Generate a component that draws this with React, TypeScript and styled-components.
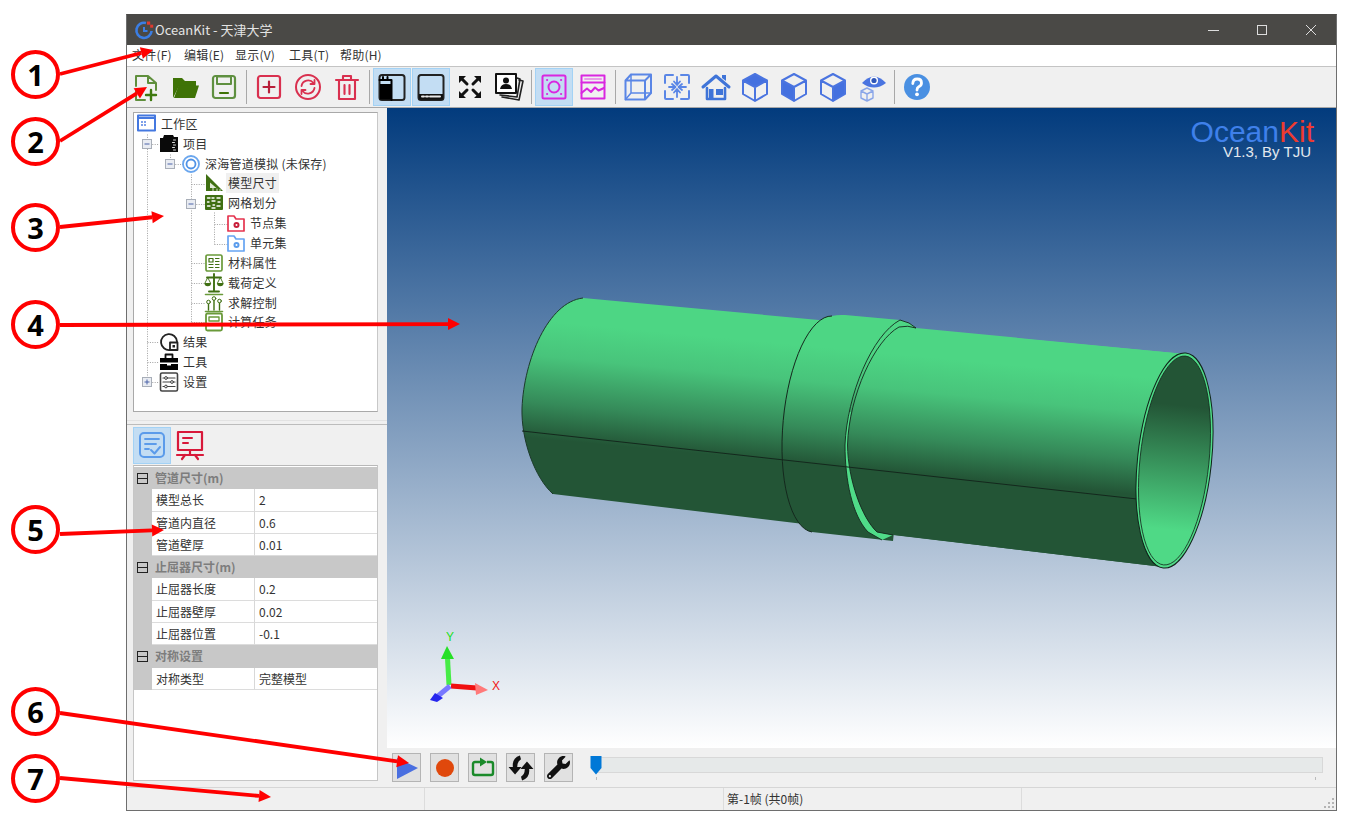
import React from "react";
import styled, { createGlobalStyle } from "styled-components";
import { FaWrench } from "react-icons/fa";

const UI_FONT = `"Noto Sans CJK SC", "Noto Sans", sans-serif`;

const Global = createGlobalStyle`
  html, body { margin: 0; padding: 0; background: #fff; }
  * { box-sizing: border-box; }
  body { font-family: ${UI_FONT}; font-size: 12px; color: #222; overflow: hidden; }
`;

const Page = styled.div`
  position: relative;
  width: 1351px;
  height: 825px;
  padding: 14px 0 0 126px;
`;
const Win = styled.div`
  width: 1211px;
  height: 797px;
  border: 1px solid #6e6e6e;
  border-top-color: #4a4946;
  display: flex;
  flex-direction: column;
  background: #f0f0f0;
`;
const TitleBar = styled.div`
  height: 30px;
  flex: none;
  background: #4a4946;
  color: #e4e4e4;
  font-size: 13px;
  display: flex;
  align-items: center;
  padding-left: 7px;
  gap: 1px;
`;
const TitleText = styled.span`
  flex: 1;
  padding-bottom: 2px;
`;
const WinControls = styled.div`
  display: flex;
  align-items: center;
  padding-right: 1px;
`;
const WinBtn = styled.div`
  width: 49px;
  height: 30px;
  display: flex;
  align-items: center;
  justify-content: center;
`;
const MenuBar = styled.div`
  height: 22px;
  flex: none;
  background: #fff;
  border-bottom: 1px solid #c4c4c4;
  display: flex;
  align-items: center;
  padding: 0 0 2px 5px;
  color: #333;
  letter-spacing: 0.2px;
`;
const MenuItem = styled.span<{ $w: number }>`
  width: ${(p) => p.$w}px;
  line-height: 19px;
`;
const ToolBar = styled.div`
  height: 41px;
  flex: none;
  background: #f0f0f0;
  border-bottom: 1px solid #a8a8a8;
  display: flex;
  align-items: center;
  padding-left: 0;
`;
const ToolBtn = styled.div<{ $on?: boolean }>`
  width: 38px;
  height: 38px;
  margin-right: 1px;
  display: flex;
  align-items: center;
  justify-content: center;
  background: ${(p) => (p.$on ? "#c3ddf3" : "transparent")};
  border: 1px solid ${(p) => (p.$on ? "#a3d2f5" : "transparent")};
`;
const ToolSep = styled.div`
  width: 1px;
  height: 34px;
  background: #a8a8a8;
  margin: 0 3px 0 2px;
`;
const Body = styled.div`
  flex: 1;
  min-height: 0;
  display: flex;
`;
const LeftPanel = styled.div`
  width: 260px;
  flex: none;
  display: flex;
  flex-direction: column;
  padding: 4px 9px 0 6px;
`;
const TreeBox = styled.div`
  position: relative;
  height: 300px;
  flex: none;
  background: #fff;
  border: 1px solid #a9a9a9;
  border-right-color: #c8c8c8;
  padding-top: 1px;
`;
const TreeLines = styled.svg`
  position: absolute;
  left: 0;
  top: 0;
`;
const TreeRow = styled.div<{ $x: number }>`
  position: relative;
  height: 19.85px;
  display: flex;
  align-items: center;
  gap: 4px;
  padding-left: ${(p) => p.$x}px;
`;
const TreeLabel = styled.span<{ $sel?: boolean }>`
  line-height: 20px;
  white-space: nowrap;
  color: #333;
  letter-spacing: 0.25px;
  background: ${(p) => (p.$sel ? "#f0f0f0" : "transparent")};
  padding: 0 2px;
  margin-left: -2px;
`;
const Splitter = styled.div`
  height: 13px;
  flex: none;
  margin: 0 -9px 0 -6px;
  border-bottom: 1px solid #bcbcbc;
  background: linear-gradient(transparent 8px, #e2e2e2 8px, #e2e2e2 9px, transparent 9px);
`;
const TabRow = styled.div`
  height: 40px;
  flex: none;
  display: flex;
  align-items: center;
  gap: 0;
`;
const TabBtn = styled.div<{ $on?: boolean }>`
  width: 38px;
  height: 37px;
  display: flex;
  align-items: center;
  justify-content: center;
  background: ${(p) => (p.$on ? "#c3ddf3" : "transparent")};
  border: 1px solid ${(p) => (p.$on ? "#a3d2f5" : "transparent")};
`;
const PropGrid = styled.div`
  height: 316px;
  flex: none;
  background: #fff;
  border: 1px solid #c6c6c6;
  border-top-color: #b8b8b8;
  padding-top: 1px;
`;
const GroupRow = styled.div`
  height: 22.3px;
  background: #c8c8c8;
  display: flex;
  align-items: center;
  color: #7d7d7d;
  font-weight: 700;
  font-size: 12px;
  line-height: 19px;
  padding-bottom: 2px;
`;
const GroupToggle = styled.svg`
  margin: 2px 7px 0 3px;
  flex: none;
`;
const PropRow = styled.div`
  height: 22.3px;
  display: grid;
  grid-template-columns: 18px 103px 1fr;
`;
const Gutter = styled.div`
  background: #c8c8c8;
`;
const PropName = styled.div`
  border-right: 1px solid #d8d8d8;
  border-bottom: 1px solid #dcdcdc;
  padding-left: 4px;
  line-height: 21px;
  color: #333;
`;
const PropVal = styled.div`
  border-bottom: 1px solid #dcdcdc;
  padding-left: 4px;
  line-height: 21px;
  color: #333;
`;
const MainCol = styled.div`
  flex: 1;
  min-width: 0;
  display: flex;
  flex-direction: column;
`;
const Viewport = styled.div`
  position: relative;
  height: 640px;
  flex: none;
  background: linear-gradient(#023b7d, #ffffff);
`;
const Scene = styled.svg`
  display: block;
`;
const Logo = styled.div`
  position: absolute;
  right: 22px;
  top: 9px;
  font-family: "Liberation Sans", Arial, sans-serif;
  text-align: right;
`;
const LogoName = styled.div`
  font-size: 30px;
  line-height: 29px;
  color: #3f80ea;
`;
const LogoKit = styled.span`
  color: #ee3b2f;
`;
const LogoSub = styled.div`
  font-size: 15px;
  line-height: 12px;
  margin-right: 3px;
  color: #e2e8ee;
`;
const AnimBar = styled.div`
  flex: 1;
  display: flex;
  align-items: flex-start;
  padding: 5px 0 0 5px;
  gap: 9px;
  background: #f0f0f0;
`;
const AnimBtn = styled.div`
  width: 29px;
  height: 29px;
  background: #e1e1e1;
  border: 1px solid #b4b4b4;
  display: flex;
  align-items: center;
  justify-content: center;
`;
const SliderWrap = styled.div`
  position: relative;
  margin-left: 6px;
  width: 748px;
  height: 28px;
`;
const SliderTrack = styled.div`
  position: absolute;
  left: 9px;
  right: 13px;
  top: 4px;
  height: 16px;
  background: #e6e9e9;
  border: 1px solid #d8d8d8;
`;
const SliderThumb = styled.svg`
  position: absolute;
  left: 2px;
  top: 2px;
`;
const Tick = styled.div<{ $side: "l" | "r" }>`
  position: absolute;
  ${(p) => (p.$side === "l" ? "left: 8px;" : "right: 20px;")}
  top: 24px;
  width: 1px;
  height: 3px;
  background: #bbb;
`;
const StatusBar = styled.div`
  height: 23px;
  flex: none;
  border-top: 1px solid #d6d6d6;
  display: grid;
  grid-template-columns: 298px 299px 298px 1fr;
  background: #f0f0f0;
  position: relative;
`;
const StatusCell = styled.div`
  border-right: 1px solid #dcdcdc;
  padding-left: 3px;
  line-height: 22px;
  color: #333;
  &:last-of-type { border-right: 0; }
`;
const Grip = styled.svg`
  position: absolute;
  right: 1px;
  bottom: 1px;
`;
const Overlay = styled.svg`
  position: absolute;
  left: 0;
  top: 0;
  pointer-events: none;
`;
const Callout = styled.div<{ $cy: number }>`
  position: absolute;
  left: 11px;
  top: ${(p) => p.$cy - 25}px;
  width: 49px;
  height: 49px;
  border: 4px solid #ff0000;
  border-radius: 50%;
  display: flex;
  align-items: center;
  justify-content: center;
  font-family: "Open Sans", sans-serif;
  font-weight: 700;
  font-size: 29px;
  line-height: 1;
  color: #000;
`;

const T = ({ children, s = 32 }: { children: React.ReactNode; s?: number }) => (
  <svg width={s} height={s} viewBox="0 0 32 32" fill="none" strokeLinejoin="round" strokeLinecap="round">
    {children}
  </svg>
);
const G1 = "#5f8f3c", RD = "#d9304f", BL = "#5a86e6", MG = "#d927e0";

const Isometric = ({ face }: { face: string }) => (
  <T>
    <path d={face} fill="#4470df" />
    <path d="M16 3 L28 9.5 V23 L16 30 L4 23 V9.5Z M4 9.5 L16 16 L28 9.5 M16 16 V30" stroke="#4a74e0" strokeWidth="2" />
  </T>
);

const toolIcons: React.ReactNode[][] = [
  [
    <T key="new">
      <path d="M6 15 V5 H18 L26 12 V19 M18 5 V12 H26 M15 29 H6 V19" stroke={G1} strokeWidth="2" />
      <path d="M21 19 V29 M16 24 H26" stroke="#3f7a10" strokeWidth="2.4" />
    </T>,
    <T key="open">
      <path d="M4 27 V7 H13 L16 10 H27 V15 H10 L4 27Z" fill="#3f7306" />
      <path d="M5 27 L9.5 14.5 H30 L26 27Z" fill="#3f7306" />
    </T>,
    <T key="save">
      <rect x="5" y="5" width="22" height="22" rx="2.5" stroke="#5f9040" strokeWidth="2.2" />
      <path d="M9 5.5 H23 V13 H9Z" stroke="#5f9040" strokeWidth="2" />
      <path d="M12 22 H20" stroke="#3f7306" strokeWidth="2.2" />
    </T>,
  ],
  [
    <T key="add">
      <rect x="5" y="5" width="22" height="22" rx="2.5" stroke={RD} strokeWidth="2.2" />
      <path d="M16 10.5 V21.5 M10.5 16 H21.5" stroke="#b81f3a" strokeWidth="2.2" />
    </T>,
    <T key="ref">
      <circle cx="16" cy="16" r="12" stroke={RD} strokeWidth="2" />
      <path d="M9.5 15 A6.8 6.8 0 0 1 21.5 12 M22.5 17 A6.8 6.8 0 0 1 10.5 20" stroke={RD} strokeWidth="1.8" />
      <path d="M22.5 9 V13 H18.5 M9.5 23 V19 H13.5" stroke={RD} strokeWidth="1.8" />
    </T>,
    <T key="del">
      <path d="M5 9 H27 M12 8.5 V5 H20 V8.5 M8 9 V28 H24 V9" stroke={RD} strokeWidth="2.1" />
      <path d="M13.5 14 V23 M18.5 14 V23" stroke={RD} strokeWidth="2.1" />
    </T>,
  ],
  [
    <T key="pl">
      <rect x="3.5" y="4" width="25" height="25" rx="2.5" fill="#c3ddf3" stroke="#222" strokeWidth="2" />
      <rect x="4" y="13" width="11" height="15.5" fill="#000" />
      <path d="M3.5 9 H15.5 V29 " stroke="#000" strokeWidth="2" />
      <path d="M7 6 V9 M11.5 6 V9" stroke="#000" strokeWidth="2" />
    </T>,
    <T key="pb">
      <rect x="3.5" y="4" width="25" height="25" rx="2.5" fill="#c3ddf3" stroke="#222" strokeWidth="2" />
      <rect x="4" y="23" width="24" height="5.5" fill="#111" />
      <path d="M7 25.5 H9 M11 25.5 H13 M15 25.5 H25" stroke="#e8e8e8" strokeWidth="2" />
    </T>,
    <T key="fs">
      <path d="M5 5 H12 L5 12Z M27 5 V12 L20 5Z M5 27 V20 L12 27Z M27 27 H20 L27 20Z" fill="#111" />
      <path d="M7 7 L13 13 M25 7 L19 13 M7 25 L13 19 M25 25 L19 19" stroke="#111" strokeWidth="3" />
    </T>,
    <T key="ph">
      <path d="M26 9 L30 10 L26 29 L9 26" stroke="#222" strokeWidth="1.6" />
      <path d="M24 7 L27 8 L24 26 L7 24" stroke="#222" strokeWidth="1.6" />
      <rect x="3" y="3" width="20" height="19" fill="#fff" stroke="#111" strokeWidth="2" />
      <circle cx="13" cy="9.5" r="3" fill="#111" />
      <path d="M7 18 Q8 13 13 13 Q18 13 19 18Z" fill="#111" />
    </T>,
  ],
  [
    <T key="sp">
      <rect x="4.5" y="4.5" width="23" height="23" rx="1.5" stroke={MG} strokeWidth="2" />
      <circle cx="16" cy="16" r="5.5" stroke={MG} strokeWidth="2" />
      <path d="M9 9 H9.2 M23 9 H23.2 M9 23 H9.2 M23 23 H23.2" stroke={MG} strokeWidth="2" />
    </T>,
    <T key="ch">
      <rect x="4.5" y="4.5" width="23" height="23" stroke={MG} strokeWidth="2" />
      <path d="M4.5 11.5 H27.5" stroke={MG} strokeWidth="2" />
      <path d="M8 8 H24" stroke="#e89be8" strokeWidth="2" />
      <path d="M4.5 22 L10 17.5 L14 21 L18 16.5 L21.5 19.5 L27 17" stroke={MG} strokeWidth="2" />
    </T>,
  ],
  [
    <T key="wf">
      <path d="M9 3.5 H29 V22 L23 28.5 H3.5 V9.5Z M3.5 9.5 H23 V28.5 M23 9.5 L29 3.5" stroke={BL} strokeWidth="2" />
      <path d="M9 3.5 V22 H29 M9 22 L3.5 28.5" stroke={BL} strokeWidth="1.5" />
    </T>,
    <T key="cp">
      <path d="M12 4 H5 Q4 4 4 5 V12 M20 4 H27 Q28 4 28 5 V12 M12 28 H5 Q4 28 4 27 V20 M20 28 H27 Q28 28 28 27 V20" stroke={BL} strokeWidth="2" />
      <path d="M16 6 V13 M13 10.5 L16 14 L19 10.5 M16 26 V19 M13 21.5 L16 18 L19 21.5 M8 16 H14 M11 13 L14.5 16 L11 19 M25 16 H18 M21 13 L17.5 16 L21 19" stroke={BL} strokeWidth="1.8" />
    </T>,
    <T key="hm">
      <path d="M3 16 L16 5 L29 16" stroke="#3f74d8" strokeWidth="3" />
      <path d="M22 4 H26 V10 L22 7Z" fill="#3f74d8" />
      <path d="M7 17 V28 H25 V17" stroke="#3f74d8" strokeWidth="2.6" />
      <rect x="16" y="18" width="7" height="6" fill="#3f74d8" />
      <rect x="9" y="18" width="4.5" height="10" fill="#3f74d8" />
    </T>,
    <Isometric key="c1" face="M16 3 L28 9.5 L16 16 L4 9.5Z" />,
    <Isometric key="c2" face="M4 9.5 L16 16 V30 L4 23Z" />,
    <Isometric key="c3" face="M28 9.5 L16 16 V30 L28 23Z" />,
    <T key="ey">
      <path d="M6 12 Q18 -1 30 12 Q18 21 6 12Z" fill="#4a74e0" />
      <circle cx="18" cy="9.5" r="4" fill="#fff" />
      <circle cx="18" cy="9.5" r="2.6" fill="#2f56b8" />
      <path d="M11 17 L17 20 V27 L11 30 L5 27 V20Z M5 20 L11 23 L17 20 M11 23 V30" stroke="#8aa6e8" strokeWidth="1.4" />
    </T>,
  ],
  [
    <T key="hp">
      <circle cx="16" cy="16" r="13" fill="#4a90e2" />
      <path d="M11.8 12.5 Q12 8 16.2 8 Q20.5 8 20.5 12 Q20.5 14.5 17.8 15.8 Q16 16.8 16 19" stroke="#fff" strokeWidth="2.8" />
      <circle cx="16" cy="23.3" r="1.9" fill="#fff" />
    </T>,
  ],
];
const activeTools = new Set(["2-0", "2-1", "3-0"]);

const TreeSvg = styled.svg`
  flex: none;
`;
const L = ({ children }: { children: React.ReactNode }) => (
  <TreeSvg width="20" height="20" viewBox="0 0 20 20" fill="none" strokeLinejoin="round" strokeLinecap="round">
    {children}
  </TreeSvg>
);
const GD = "#3f6f12", GL = "#6a9a3a";
const Folder = ({ c, dark }: { c: string; dark: string }) => (
  <L>
    <path d="M2 3 H8 L10 6 H18 V18 H2Z" fill="#fff" stroke={c} strokeWidth="1.7" />
    <circle cx="10.5" cy="12" r="3" fill={dark} />
    <circle cx="10.5" cy="12" r="1" fill="#fff" />
  </L>
);
const treeIcons: Record<string, React.ReactNode> = {
  ws: (
    <L>
      <rect x="1" y="1.5" width="17" height="15" fill="#fff" stroke="#4478e0" strokeWidth="2" />
      <path d="M1 4 H18" stroke="#4478e0" strokeWidth="2" />
      <path d="M4 7 H6 V9 H4Z M7 7 H9 V9 H7Z M4 10 H6 V12 H4Z M7 10 H9 V12 H7Z" fill="#7ea0ea" />
    </L>
  ),
  proj: (
    <L>
      <path d="M1 4 H4 L5 1 H14 L15 3 H19 V18 H1Z" fill="#0a0a0a" />
      <path d="M14.5 6 H16.5 M13.5 8.5 H15.5 M14.5 11 H16.5 M13.5 13.5 H15.5 M14.5 16 H16.5" stroke="#ddd" strokeWidth="1" />
    </L>
  ),
  ring: (
    <L>
      <circle cx="10" cy="10" r="8" stroke="#6aa6ee" strokeWidth="1.8" />
      <circle cx="10" cy="10" r="4.5" stroke="#4f92e6" strokeWidth="1.8" />
    </L>
  ),
  tri: (
    <L>
      <path d="M2 1 L19 18 H2Z" fill={GD} />
      <path d="M6 9.5 L12.5 15 H6Z" fill="#dfe8d4" />
      <path d="M9 15 V18 M13 16 V18 M16 16.5 V18" stroke="#fff" strokeWidth="0.8" />
    </L>
  ),
  mesh: (
    <L>
      <rect x="1" y="2" width="18" height="15" fill={GD} rx="1" />
      <path d="M3.5 5 H6 M8 5 H10 M13 5 H16 M3.5 9 H5 M8 8 H11 M14 9 H16 M3.5 13 H6 M9 12 H10.5 M13 13 H16 M8 15 H11" stroke="#fff" strokeWidth="1.4" />
    </L>
  ),
  red: <Folder c="#e5344f" dark="#c81e3a" />,
  blue: <Folder c="#66a4f2" dark="#5b9cec" />,
  mat: (
    <L>
      <rect x="2" y="2" width="16" height="16" rx="1.5" stroke={GL} strokeWidth="1.7" />
      <path d="M5 5.5 H9 V9 H5Z M5 11.5 H9 M5 14.5 H9 M11.5 5.5 H15 M11.5 8.5 H15 M11.5 11.5 H15 M11.5 14.5 H15" stroke={GD} strokeWidth="1.2" />
    </L>
  ),
  load: (
    <L>
      <path d="M10 1 V17 M5 18.5 H15 M3 4.5 H17" stroke={GD} strokeWidth="1.9" />
      <path d="M0.5 10 H7 A3.2 3.2 0 0 1 0.5 10Z M13 10 H19.5 A3.2 3.2 0 0 1 13 10Z" fill={GD} />
      <path d="M3.7 4.5 L1 10 M3.7 4.5 L6.5 10 M16.3 4.5 L13.5 10 M16.3 4.5 L19 10" stroke={GD} strokeWidth="0.9" />
    </L>
  ),
  solve: (
    <L>
      <path d="M1.5 1.5 H18.5 M1.5 18.5 H18.5" stroke={GL} strokeWidth="1.6" />
      <path d="M4.5 9 V17 M10 5 V17 M15.5 7 V17" stroke={GD} strokeWidth="1.4" />
      <circle cx="4.5" cy="9" r="1.8" stroke={GD} fill="#fff" />
      <circle cx="10" cy="5.5" r="1.8" stroke={GD} fill="#fff" />
      <circle cx="15.5" cy="8" r="1.8" stroke={GD} fill="#fff" />
    </L>
  ),
  task: (
    <L>
      <rect x="2" y="1.5" width="16" height="17" rx="1.5" stroke={GL} strokeWidth="1.8" />
      <rect x="5" y="5" width="10" height="4" stroke={GL} strokeWidth="1.4" />
      <path d="M2.5 13 H17.5" stroke={GL} strokeWidth="1.6" />
    </L>
  ),
  res: (
    <L>
      <path d="M11 18 A8 8 0 1 1 18 9.5" stroke="#222" strokeWidth="1.8" />
      <rect x="11" y="10.5" width="7.5" height="7.5" fill="#fff" stroke="#222" strokeWidth="1.8" />
      <rect x="13.5" y="13" width="2.5" height="2.5" fill="#222" />
    </L>
  ),
  tool: (
    <L>
      <path d="M6.5 6 V2.5 H13.5 V6" stroke="#111" strokeWidth="1.8" />
      <path d="M1 6 H19 V10.5 H1Z M1 12 H8 V13.5 H12 V12 H19 V18 H1Z" fill="#000" />
    </L>
  ),
  set: (
    <L>
      <rect x="1.5" y="1" width="17" height="18" rx="1.5" stroke="#444" strokeWidth="1.6" />
      <path d="M4 6 H16 M4 10 H16 M4 14.5 H16" stroke="#444" strokeWidth="1.2" />
      <circle cx="7" cy="6" r="1.4" fill="#fff" stroke="#444" />
      <circle cx="13" cy="10" r="1.4" fill="#fff" stroke="#444" />
      <circle cx="7" cy="14.5" r="1.4" fill="#fff" stroke="#444" />
    </L>
  ),
};
const treeData: { x: number; icon: string; text: string; sel?: boolean }[] = [
  { x: 3, icon: "ws", text: "工作区" },
  { x: 25, icon: "proj", text: "项目" },
  { x: 47, icon: "ring", text: "深海管道模拟 (未保存)" },
  { x: 70, icon: "tri", text: "模型尺寸", sel: true },
  { x: 70, icon: "mesh", text: "网格划分" },
  { x: 92, icon: "red", text: "节点集" },
  { x: 92, icon: "blue", text: "单元集" },
  { x: 70, icon: "mat", text: "材料属性" },
  { x: 70, icon: "load", text: "载荷定义" },
  { x: 70, icon: "solve", text: "求解控制" },
  { x: 70, icon: "task", text: "计算任务" },
  { x: 25, icon: "res", text: "结果" },
  { x: 25, icon: "tool", text: "工具" },
  { x: 25, icon: "set", text: "设置" },
];

const OX = 134, OY = 113;
const Expander = ({ x, y, plus }: { x: number; y: number; plus?: boolean }) => (
  <g transform={`translate(${x - OX - 5},${y - OY - 5})`}>
    <rect x="0.5" y="0.5" width="9" height="9" fill="#e9ecf2" stroke="#a8aeb8" />
    <path d="M2.5 5 H7.5" stroke="#4a62a8" />
    {plus && <path d="M5 2.5 V7.5" stroke="#4a62a8" />}
  </g>
);
const TreeGuides = () => {
  const seg = (x1: number, y1: number, x2: number, y2: number) => (
    <line key={`${x1}-${y1}-${x2}-${y2}`} x1={x1 - OX + 0.5} y1={y1 - OY + 0.5} x2={x2 - OX + 0.5} y2={y2 - OY + 0.5} stroke="#a0a0a0" strokeDasharray="1 1.4" />
  );
  return (
    <TreeLines width="243" height="298">
      {seg(147, 134, 147, 382)}
      {[144, 342, 362, 382].map((y) => seg(147, y, 159, y))}
      {seg(170, 154, 170, 164)}
      {seg(170, 164, 183, 164)}
      {seg(191, 174, 191, 322)}
      {[184, 204, 263, 283, 303, 322].map((y) => seg(191, y, 204, y))}
      {seg(214, 212, 214, 244)}
      {[224, 244].map((y) => seg(214, y, 227, y))}
      <Expander x={147} y={144} />
      <Expander x={170} y={164} />
      <Expander x={191} y={204} />
      <Expander x={147} y={382} plus />
    </TreeLines>
  );
};

const groups = [
  { name: "管道尺寸(m)", rows: [["模型总长", "2"], ["管道内直径", "0.6"], ["管道壁厚", "0.01"]] },
  { name: "止屈器尺寸(m)", rows: [["止屈器长度", "0.2"], ["止屈器壁厚", "0.02"], ["止屈器位置", "-0.1"]] },
  { name: "对称设置", rows: [["对称类型", "完整模型"]] },
];

const Pipe = () => (
  <Scene width="949" height="640" viewBox="387 108 949 640">
    <defs>
      <linearGradient id="body" gradientUnits="userSpaceOnUse" x1="800" y1="345" x2="789" y2="462">
        <stop offset="0" stopColor="#4dd684" />
        <stop offset="0.3" stopColor="#48c47b" />
        <stop offset="0.7" stopColor="#358a59" />
        <stop offset="1" stopColor="#235536" />
      </linearGradient>
      <linearGradient id="bore" gradientUnits="userSpaceOnUse" x1="1170" y1="405" x2="1170" y2="530">
        <stop offset="0" stopColor="#235536" />
        <stop offset="1" stopColor="#4fd986" />
      </linearGradient>
    </defs>
    <path d="M583 298 L1185 354 L1163 567 L553 494 C535 478 521 440 522 408 C524 360 548 302 583 298Z" fill="url(#body)" />
    <path d="M553 494 C535 478 521 440 522 408 C524 360 548 302 583 298" stroke="#1c3a2a" fill="none" />
    <path d="M832 316 Q838 314.5 845 315 L900 320 Q910 322 916 328 L893 541 L812 532 A40 108.5 5.3 0 1 832 316Z" fill="url(#body)" />
    <path d="M812 532 A40 108.5 5.3 0 1 832 316" stroke="#14281d" fill="none" />
    <path d="M849 412 C846 430 845 440 845 445 C845 480 852 515 868 532 L882 540 L893 535 L877 532 C862 518 848 480 848 445 C848 435 849 425 851 412Z" fill="#4fdc88" />
    <path d="M916 328 Q908 325 900 327 C875 340 849 395 848 445 C848 480 862 518 877 532 L893 535 L1163 567 L1185 354Z" fill="url(#body)" />
    <path d="M916 328 Q908 325 899 327 C875 340 849 395 847.5 445 C848 480 862 518 877 532 L893 535" stroke="#14281d" fill="none" strokeWidth="0.9" />
    <path d="M916 328 Q910 322 900 320 C872 335 847 395 845 445 C845 480 852 515 868 532 L882 540" stroke="#14281d" fill="none" strokeWidth="0.9" />
    <path d="M522 431 L1137 499" stroke="#14281d" strokeWidth="1" fill="none" />
    <ellipse cx="1174.5" cy="460.5" rx="37" ry="108" transform="rotate(6 1174.5 460.5)" fill="#4fdc88" stroke="#10241a" strokeWidth="1" />
    <ellipse cx="1174.5" cy="460.5" rx="34.5" ry="105" transform="rotate(6 1174.5 460.5)" fill="url(#bore)" stroke="#14281d" strokeWidth="0.8" />

    <path d="M449 685 L447.5 658" stroke="#46ec46" strokeWidth="5" />
    <path d="M447 646 L441 659 L454 659Z" fill="#27e027" />
    <path d="M451 686 L477 688" stroke="#f01010" strokeWidth="5" />
    <path d="M488 690 L475 683 L476 695Z" fill="#ff7a7a" />
    <path d="M450 686 L438 696" stroke="#7878ff" strokeWidth="5" />
    <path d="M430 700 L435 693 L443 698 L437 702Z" fill="#2626ee" />
    <text x="450" y="641" fontFamily="Liberation Sans, sans-serif" fontSize="12" fill="#22e022" textAnchor="middle">Y</text>
    <text x="496" y="690" fontFamily="Liberation Sans, sans-serif" fontSize="12" fill="#f01818" textAnchor="middle">X</text>
  </Scene>
);

const arrows: number[][] = [
  [60, 74, 153, 50],
  [60, 141, 147, 87],
  [60, 227, 164, 216],
  [60, 325, 460, 324],
  [60, 534, 164, 530],
  [60, 713, 409, 763],
  [60, 778, 271, 797],
];
const Arrow = ({ a }: { a: number[] }) => {
  const [x1, y1, x2, y2] = a;
  const len = Math.hypot(x2 - x1, y2 - y1);
  const ux = (x2 - x1) / len, uy = (y2 - y1) / len;
  const bx = x2 - ux * 12, by = y2 - uy * 12;
  const px = -uy * 6, py = ux * 6;
  return (
    <g>
      <line x1={x1} y1={y1} x2={bx} y2={by} stroke="#ff0000" strokeWidth="3.8" />
      <polygon points={`${x2},${y2} ${bx + px},${by + py} ${bx - px},${by - py}`} fill="#ff0000" />
    </g>
  );
};

export default function App() {
  return (
    <Page>
      <Global />
      <Win>
        <TitleBar>
          <svg width="20" height="20" viewBox="0 0 20 20" fill="none">
            <path d="M12 3 A7.6 7.6 0 1 0 17.6 11" stroke="#3b7ee4" strokeWidth="2.6" />
            <path d="M10 7 V11 H13.5" stroke="#3b7ee4" strokeWidth="2" />
            <rect x="13" y="1.5" width="3.2" height="3.2" fill="#e03a30" />
            <rect x="16.2" y="4.7" width="3" height="3" fill="#e03a30" />
          </svg>
          <TitleText>OceanKit - 天津大学</TitleText>
          <WinControls>
            <WinBtn>
              <svg width="12" height="12" viewBox="0 0 12 12"><path d="M1 6.5 H12" stroke="#ddd" /></svg>
            </WinBtn>
            <WinBtn>
              <svg width="12" height="12" viewBox="0 0 12 12"><rect x="1.5" y="1.5" width="9" height="9" fill="none" stroke="#ddd" /></svg>
            </WinBtn>
            <WinBtn>
              <svg width="12" height="12" viewBox="0 0 12 12"><path d="M1 1 L11 11 M11 1 L1 11" stroke="#ddd" /></svg>
            </WinBtn>
          </WinControls>
        </TitleBar>
        <MenuBar>
          <MenuItem $w={52}>文件(F)</MenuItem>
          <MenuItem $w={51}>编辑(E)</MenuItem>
          <MenuItem $w={54}>显示(V)</MenuItem>
          <MenuItem $w={51}>工具(T)</MenuItem>
          <MenuItem $w={50}>帮助(H)</MenuItem>
        </MenuBar>
        <ToolBar>
          {toolIcons.map((group, gi) => (
            <React.Fragment key={gi}>
              {gi > 0 && <ToolSep />}
              {group.map((icon, i) => (
                <ToolBtn key={i} $on={activeTools.has(`${gi}-${i}`)}>
                  {icon}
                </ToolBtn>
              ))}
            </React.Fragment>
          ))}
        </ToolBar>
        <Body>
          <LeftPanel>
            <TreeBox>
              <TreeGuides />
              {treeData.map((r) => (
                <TreeRow key={r.text} $x={r.x}>
                  {treeIcons[r.icon]}
                  <TreeLabel $sel={r.sel}>{r.text}</TreeLabel>
                </TreeRow>
              ))}
            </TreeBox>
            <Splitter />
            <TabRow>
              <TabBtn $on>
                <T>
                  <rect x="4" y="4" width="24" height="24" rx="4" stroke="#5b9bea" strokeWidth="2" />
                  <path d="M9 10 H23 M9 15 H20 M9 20 H13" stroke="#5b9bea" strokeWidth="1.8" />
                  <path d="M15 21 L18.5 24.5 L24 18" stroke="#5b9bea" strokeWidth="2" />
                </T>
              </TabBtn>
              <TabBtn>
                <T>
                  <rect x="4" y="3" width="24" height="18" stroke="#d8193a" strokeWidth="2.2" />
                  <path d="M9 9 H18 M9 14 H14" stroke="#d8193a" strokeWidth="2" />
                  <path d="M16 21 V26 M3 26 H29 M8 30 L11 26 M24 30 L21 26" stroke="#d8193a" strokeWidth="2.2" />
                </T>
              </TabBtn>
            </TabRow>
            <PropGrid>
              {groups.map((g) => (
                <React.Fragment key={g.name}>
                  <GroupRow>
                    <GroupToggle width="11" height="11" viewBox="0 0 11 11">
                      <rect x="0.5" y="0.5" width="10" height="10" fill="none" stroke="#222" />
                      <path d="M0.5 5.5 H10.5" stroke="#222" />
                    </GroupToggle>
                    {g.name}
                  </GroupRow>
                  {g.rows.map(([k, v]) => (
                    <PropRow key={k}>
                      <Gutter />
                      <PropName>{k}</PropName>
                      <PropVal>{v}</PropVal>
                    </PropRow>
                  ))}
                </React.Fragment>
              ))}
            </PropGrid>
          </LeftPanel>
          <MainCol>
            <Viewport>
              <Pipe />
              <Logo>
                <LogoName>
                  Ocean<LogoKit>Kit</LogoKit>
                </LogoName>
                <LogoSub>V1.3, By TJU</LogoSub>
              </Logo>
            </Viewport>
            <AnimBar>
              <AnimBtn>
                <svg width="24" height="24" viewBox="0 0 24 24"><path d="M2 2 L23 12 L2 23Z" fill="#4a6fe0" /></svg>
              </AnimBtn>
              <AnimBtn>
                <svg width="24" height="24" viewBox="0 0 24 24"><circle cx="12" cy="12" r="9" fill="#e0480c" /></svg>
              </AnimBtn>
              <AnimBtn>
                <svg width="24" height="24" viewBox="0 0 24 24" fill="none">
                  <path d="M11 6 H4 Q2 6 2 8 V17 Q2 19 4 19 H20 Q22 19 22 17 V8 Q22 6 20 6 H16" stroke="#1a8a2a" strokeWidth="2.4" />
                  <path d="M9 1.5 L16 6 L9 10.5Z" fill="#1a8a2a" />
                </svg>
              </AnimBtn>
              <AnimBtn>
                <svg width="26" height="26" viewBox="0 0 24 24" fill="#111">
                  <path d="M11 0.5 Q3.5 3 4.5 11 H0.5 L6.5 18 L12.5 11 H8.5 Q8.5 6 12 4Z" />
                  <path d="M13 23.5 Q20.5 21 19.5 13 H23.5 L17.5 6 L11.5 13 H15.5 Q15.5 18 12 20Z" />
                </svg>
              </AnimBtn>
              <AnimBtn>
                <FaWrench size={23} color="#111" />
              </AnimBtn>
              <SliderWrap>
                <SliderTrack />
                <Tick $side="l" />
                <Tick $side="r" />
                <SliderThumb width="12" height="20" viewBox="0 0 12 20">
                  <path d="M0.5 1 H11.5 V13 L6 19.5 L0.5 13Z" fill="#0078d7" />
                </SliderThumb>
              </SliderWrap>
            </AnimBar>
          </MainCol>
        </Body>
        <StatusBar>
          <StatusCell />
          <StatusCell />
          <StatusCell>第-1帧 (共0帧)</StatusCell>
          <StatusCell />
          <Grip width="12" height="12" viewBox="0 0 12 12" fill="#b4b4b4">
            <rect x="9" y="1" width="2" height="2" />
            <rect x="5" y="5" width="2" height="2" />
            <rect x="9" y="5" width="2" height="2" />
            <rect x="1" y="9" width="2" height="2" />
            <rect x="5" y="9" width="2" height="2" />
            <rect x="9" y="9" width="2" height="2" />
          </Grip>
        </StatusBar>
      </Win>
      <Overlay width="1351" height="825">
        {arrows.map((a, i) => (
          <Arrow key={i} a={a} />
        ))}
      </Overlay>
      {[75, 142, 228, 325, 530, 712, 779].map((cy, i) => (
        <Callout key={cy} $cy={cy}>
          {i + 1}
        </Callout>
      ))}
    </Page>
  );
}
